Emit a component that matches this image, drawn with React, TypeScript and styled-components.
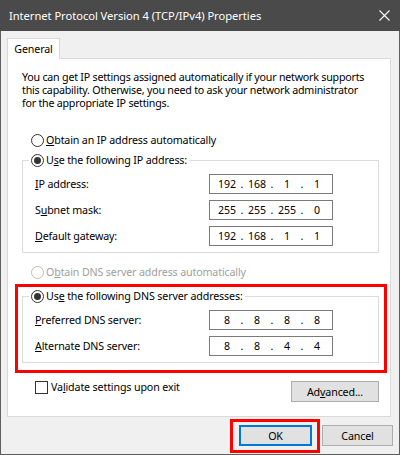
import React from 'react';
import styled, { createGlobalStyle } from 'styled-components';

const Global = createGlobalStyle`
  html, body { margin: 0; padding: 0; background: #f0f0f0; }
  body {
    font-family: "Noto Sans", "Open Sans", sans-serif;
    font-size: 10.7px;
    letter-spacing: -0.15px;
    color: #000;
  }
  * { box-sizing: border-box; }
`;

const Window = styled.div`
  width: 400px;
  height: 455px;
  display: flex;
  flex-direction: column;
  background: #f0f0f0;
`;

const TitleBar = styled.div`
  height: 31px;
  flex: none;
  background: #4a4a4a;
  color: #fff;
  display: flex;
  align-items: center;
  justify-content: space-between;
  padding: 0 10px 0 9px;
`;

const Title = styled.span`
  font-size: 11.2px;
  letter-spacing: -0.05px;
  line-height: 14px;
`;

const Frame = styled.div`
  flex: 1;
  border: 1px solid #5f5f5f;
  border-top: none;
  padding: 7px 6px 0 6px;
  display: flex;
  flex-direction: column;
`;

const TabStrip = styled.div`
  display: flex;
`;

const Tab = styled.div`
  position: relative;
  z-index: 1;
  width: 53px;
  height: 21px;
  margin-bottom: -1px;
  background: #fff;
  border: 1px solid #d9d9d9;
  border-bottom: none;
  display: flex;
  align-items: center;
  justify-content: center;
  padding-bottom: 1px;
`;

const Panel = styled.div`
  width: 384px;
  height: 359px;
  background: #fff;
  border: 1px solid #d9d9d9;
  padding: 12px 11px 14px 14px;
  display: flex;
  flex-direction: column;
`;

const Description = styled.p`
  margin: 0;
  line-height: 13px;
  white-space: nowrap;
  letter-spacing: -0.23px;
`;

const RadioRow = styled.label<{ $top: number; $disabled?: boolean }>`
  display: flex;
  align-items: center;
  height: 14px;
  margin: ${(p) => p.$top}px 0 0 9px;
  color: ${(p) => (p.$disabled ? '#a0a0a0' : '#000')};
  white-space: nowrap;
  line-height: 14px;
`;

const RadioCircle = styled.span<{ $checked?: boolean; $disabled?: boolean }>`
  width: 13px;
  height: 13px;
  flex: none;
  border-radius: 50%;
  border: 1px solid ${(p) => (p.$disabled ? '#bcbcbc' : '#333')};
  background: #fff;
  margin-right: 2px;
  display: flex;
  align-items: center;
  justify-content: center;
  &::after {
    content: '';
    display: ${(p) => (p.$checked ? 'block' : 'none')};
    width: 7px;
    height: 7px;
    border-radius: 50%;
    background: #333;
  }
`;

const Key = styled.span`
  text-decoration: underline;
  text-underline-offset: 1px;
`;

const Group = styled.fieldset`
  margin: 0;
  border: 1px solid #dcdcdc;
  padding: 7px 0 6px 12px;
  min-width: 0;
  display: grid;
  grid-template-columns: 174px 124px;
  grid-auto-rows: 20px;
  row-gap: 6px;
  align-items: center;
`;

const GroupSlot = styled.div<{ $top: number }>`
  position: relative;
  margin-top: ${(p) => p.$top}px;
`;

const Legend = styled.legend`
  padding: 0 2px;
  margin-left: -6px;
  height: 14px;
  line-height: 14px;
  display: flex;
  align-items: center;
  white-space: nowrap;
`;

const FieldLabel = styled.span`
  white-space: nowrap;
  line-height: 14px;
`;

const IpBox = styled.div`
  width: 124px;
  height: 20px;
  border: 1px solid #7a7a7a;
  background: #fff;
  display: flex;
  align-items: center;
  padding-left: 5px;
  line-height: 14px;
  font-size: 10.6px;
  letter-spacing: 0;
`;

const Octet = styled.span`
  width: 24px;
  text-align: center;
`;

const Dot = styled.span`
  width: 6px;
  text-align: center;
`;

const RedFrame = styled.div<{ $inset: string }>`
  position: absolute;
  inset: ${(p) => p.$inset};
  border: 3px solid #ff0000;
  pointer-events: none;
`;

const BottomRow = styled.div`
  margin-top: 18px;
  display: flex;
  justify-content: space-between;
  align-items: flex-start;
`;

const CheckRow = styled.label`
  display: flex;
  align-items: center;
  height: 13px;
  margin-left: 13px;
  white-space: nowrap;
  line-height: 13px;
`;

const CheckBox = styled.span`
  width: 13px;
  height: 13px;
  border: 1px solid #333;
  background: #fff;
  margin-right: 3px;
  flex: none;
`;

const Button = styled.div<{ $width: number; $default?: boolean }>`
  position: relative;
  width: ${(p) => p.$width}px;
  height: 21px;
  background: #e1e1e1;
  border: ${(p) => (p.$default ? '2px solid #0078d7' : '1px solid #adadad')};
  display: flex;
  align-items: center;
  justify-content: center;
  line-height: 14px;
  white-space: nowrap;
`;

const ButtonRow = styled.div`
  margin-top: 8px;
  display: flex;
  justify-content: flex-end;
  gap: 10px;
`;

const CloseIcon = () => (
  <svg width="11" height="11" viewBox="0 0 11 11">
    <path d="M0.5 0.5 L10.5 10.5 M10.5 0.5 L0.5 10.5" stroke="#fff" strokeWidth="1.1" fill="none" />
  </svg>
);

const Ip = ({ parts }: { parts: string[] }) => (
  <IpBox>
    {parts.map((p, i) => (
      <React.Fragment key={i}>
        <Octet>{p}</Octet>
        {i < 3 && <Dot>.</Dot>}
      </React.Fragment>
    ))}
  </IpBox>
);

export default function App() {
  return (
    <>
      <Global />
      <Window>
        <TitleBar>
          <Title>Internet Protocol Version 4 (TCP/IPv4) Properties</Title>
          <CloseIcon />
        </TitleBar>
        <Frame>
          <TabStrip>
            <Tab>General</Tab>
          </TabStrip>
          <Panel>
            <Description>
              You can get IP settings assigned automatically if your network supports
              <br />
              this capability. Otherwise, you need to ask your network administrator
              <br />
              for the appropriate IP settings.
            </Description>

            <RadioRow $top={23}>
              <RadioCircle />
              <span>
                <Key>O</Key>btain an IP address automatically
              </span>
            </RadioRow>

            <GroupSlot $top={6}>
              <Group>
                <Legend>
                  <RadioCircle $checked />
                  <span>
                    U<Key>s</Key>e the following IP address:
                  </span>
                </Legend>
                <FieldLabel>
                  <Key>I</Key>P address:
                </FieldLabel>
                <Ip parts={['192', '168', '1', '1']} />
                <FieldLabel>
                  S<Key>u</Key>bnet mask:
                </FieldLabel>
                <Ip parts={['255', '255', '255', '0']} />
                <FieldLabel>
                  <Key>D</Key>efault gateway:
                </FieldLabel>
                <Ip parts={['192', '168', '1', '1']} />
              </Group>
            </GroupSlot>

            <RadioRow $top={12} $disabled>
              <RadioCircle $disabled />
              <span>
                O<Key>b</Key>tain DNS server address automatically
              </span>
            </RadioRow>

            <GroupSlot $top={10}>
              <Group>
                <Legend>
                  <RadioCircle $checked />
                  <span>
                    Us<Key>e</Key> the following DNS server addresses:
                  </span>
                </Legend>
                <FieldLabel>
                  <Key>P</Key>referred DNS server:
                </FieldLabel>
                <Ip parts={['8', '8', '8', '8']} />
                <FieldLabel>
                  <Key>A</Key>lternate DNS server:
                </FieldLabel>
                <Ip parts={['8', '8', '4', '4']} />
              </Group>
              <RedFrame $inset="-5px -8px -10px -7px" />
            </GroupSlot>

            <BottomRow>
              <CheckRow>
                <CheckBox />
                <span>
                  Va<Key>l</Key>idate settings upon exit
                </span>
              </CheckRow>
              <Button $width={88}>
                Ad<Key>v</Key>anced...
              </Button>
            </BottomRow>
          </Panel>
          <ButtonRow>
            <Button $width={73} $default>
              OK
              <RedFrame $inset="-8px -10px -9px -11px" />
            </Button>
            <Button $width={71}>Cancel</Button>
          </ButtonRow>
        </Frame>
      </Window>
    </>
  );
}
